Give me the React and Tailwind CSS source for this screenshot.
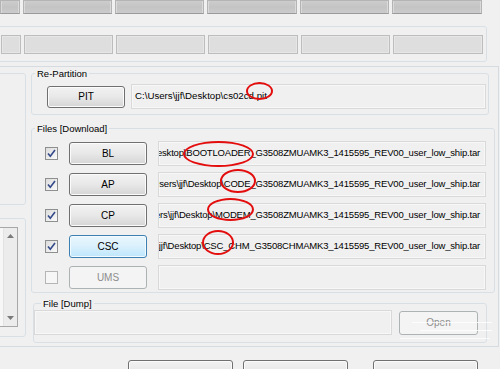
import React from "react";

const font = { fontFamily: '"Liberation Sans", Arial, sans-serif' };

const topCells = [20, 89, 89, 90, 89, 90];

function WinButton({ label, active, disabled, className = "" }) {
  let look =
    "border-[#707070] bg-gradient-to-b from-[#f2f2f2] via-[#e8e8e8] to-[#d5d5d5] text-black shadow-[inset_0_0_0_1px_#fbfbfb]";
  if (active)
    look =
      "border-[#3c7fb1] bg-gradient-to-b from-[#eaf6fd] via-[#d9f0fc] to-[#bee6fd] text-black shadow-[inset_0_0_0_1px_#f4fbff]";
  if (disabled) look = "border-[#adb2b5] bg-[#f4f4f4] text-[#8d8d8d]";
  return (
    <div
      className={`flex items-center justify-center rounded-[3px] border text-[10px] ${look} ${className}`}
    >
      {label}
    </div>
  );
}

function Check({ on }) {
  return (
    <div
      className={`w-[13px] h-[13px] shrink-0 border ${
        on
          ? "border-[#8e8f8f] bg-gradient-to-br from-[#dcdcdc] to-[#fafafa]"
          : "border-[#b5b5b5] bg-[#f6f6f6]"
      }`}
    >
      {on && (
        <svg width="11" height="11" viewBox="0 0 11 11">
          <path d="M2 5.5 L4.3 8.3 L9 2" fill="none" stroke="#33498a" strokeWidth="1.6" />
        </svg>
      )}
    </div>
  );
}

function Field({ text, className = "" }) {
  return (
    <div
      className={`flex items-center justify-end overflow-hidden whitespace-nowrap border border-[#d9d9d9] bg-[#f0f0f0] pr-[5px] text-[9.5px] tracking-[-0.18px] text-black shadow-[inset_0_0_0_1px_#f7f7f7] ${className}`}
    >
      {text}
    </div>
  );
}

const files = [
  { label: "BL", on: true, text: "C:\\Users\\jjf\\Desktop\\BOOTLOADER_G3508ZMUAMK3_1415595_REV00_user_low_ship.tar" },
  { label: "AP", on: true, text: "C:\\Users\\jjf\\Desktop\\CODE_G3508ZMUAMK3_1415595_REV00_user_low_ship.tar" },
  { label: "CP", on: true, text: "C:\\Users\\jjf\\Desktop\\MODEM_G3508ZMUAMK3_1415595_REV00_user_low_ship.tar" },
  { label: "CSC", on: true, active: true, text: "C:\\Users\\jjf\\Desktop\\CSC_CHM_G3508CHMAMK3_1415595_REV00_user_low_ship.tar" },
  { label: "UMS", on: false, disabled: true, text: "" },
];

// red hand-drawn marks over the paths
const marks = [
  "left-[246px] top-[82px] w-[27px] h-[18px]",
  "left-[183px] top-[141px] w-[71px] h-[26px]",
  "left-[220px] top-[169px] w-[36px] h-[24px]",
  "left-[207px] top-[198px] w-[47px] h-[23px]",
  "left-[202px] top-[230px] w-[32px] h-[25px]",
];

export default function App() {
  return (
    <div className="relative w-[500px] h-[369px] overflow-hidden bg-[#f0f0f0]" style={font}>
      {/* top progress cells */}
      <div className="flex gap-[3px] h-[14px]">
        {topCells.map((w, i) => (
          <div
            key={i}
            style={{ width: w }}
            className="h-full border border-[#b4b4b4] border-b-[#9a9a9a] bg-gradient-to-b from-[#cdcdcd] via-[#c4c4c4] to-[#cbcbcd] shadow-[inset_1px_0_0_#dadada,inset_-1px_0_0_#dadada]"
          />
        ))}
      </div>

      {/* status cells */}
      <div className="mt-[12px] -ml-[4px] w-[491px] h-[36px] rounded-[3px] border border-[#d8e0e6] pt-[8px] pl-[4px]">
        <div className="flex gap-[3px] h-[19px]">
          {topCells.map((w, i) => (
            <div
              key={i}
              style={{ width: w }}
              className="h-full border border-[#bdbdbd] bg-[#dedede] shadow-[inset_0_0_0_1px_#e6e6e6]"
            />
          ))}
        </div>
      </div>

      {/* main area */}
      <div className="mt-[4px] w-[499px] h-[281px] border-t border-r border-b border-[#d6dbdf] flex">
        {/* left column */}
        <div className="w-[26px] shrink-0">
          <div className="mt-[6px] -ml-[4px] w-[30px] h-[132px] rounded-[3px] border border-[#d8e0e6] pt-[20px] text-[11px] leading-[11px] text-[#8de3ea]">
            <div className="-ml-[5px]">l</div>
            <div className="-ml-[5px]">l</div>
          </div>
          <div className="mt-[13px] -ml-[4px] w-[30px] h-[119px] rounded-[3px] border border-[#d8e0e6] pt-[8px]">
            <div className="w-[21px] h-[100px] border-t border-r border-b border-[#a8a8a8] bg-[#f7f7f7] flex justify-end">
              <div className="w-[14px] h-full border-l border-[#e3e3e3] bg-[#ececec] flex flex-col items-center justify-between py-[6px]">
                <svg width="7" height="4" viewBox="0 0 7 4">
                  <path d="M0 4 L3.5 0 L7 4 Z" fill="#7a7a7a" />
                </svg>
                <svg width="7" height="4" viewBox="0 0 7 4">
                  <path d="M0 0 L3.5 4 L7 0 Z" fill="#7a7a7a" />
                </svg>
              </div>
            </div>
          </div>
        </div>

        {/* right column */}
        <div className="ml-[5px]">
          <fieldset className="w-[458px] rounded-[3px] border border-[#d8e0e6] pt-[4px] pb-[5px]">
            <legend className="ml-[3px] px-[2px] text-[9.5px] leading-[13px] text-black">Re-Partition</legend>
            <div className="flex items-center h-[25px] pl-[15px] gap-[6px]">
              <WinButton label="PIT" className="w-[78px] h-[22px]" />
              <div className="flex items-center w-[355px] h-[25px] border border-[#d9d9d9] bg-[#f0f0f0] pl-[3px] text-[9.7px] text-black whitespace-nowrap shadow-[inset_0_0_0_1px_#f7f7f7]">
                C:\Users\jjf\Desktop\cs02cd.pit
              </div>
            </div>
          </fieldset>

          <fieldset className="mt-[7px] w-[464px] rounded-[3px] border border-[#d8e0e6] pt-[6px] pb-[2px]">
            <legend className="ml-[3px] px-[2px] text-[9.5px] leading-[13px] text-black">Files [Download]</legend>
            <div className="flex flex-col gap-[6px]">
              {files.map((f) => (
                <div key={f.label} className="flex items-center h-[25px] pl-[13px]">
                  <Check on={f.on} />
                  <WinButton
                    label={f.label}
                    active={f.active}
                    disabled={f.disabled}
                    className="ml-[11px] w-[78px] h-[23px]"
                  />
                  <Field text={f.text} className="ml-[11px] w-[328px] h-[25px]" />
                </div>
              ))}
            </div>
          </fieldset>

          <fieldset className="mt-[4px] ml-[2px] w-[454px] rounded-[3px] border border-[#d8e0e6] pb-[7px]">
            <legend className="ml-[7px] px-[2px] text-[9.5px] leading-[13px] text-black">File [Dump]</legend>
            <div className="flex items-center h-[25px]">
              <Field text="" className="w-[358px] h-[25px]" />
              <WinButton label="Open" disabled className="ml-[7px] w-[79px] h-[24px]" />
            </div>
          </fieldset>
        </div>
      </div>

      {/* bottom buttons */}
      <div className="mt-[13px] flex">
        <WinButton label="" className="ml-[128px] w-[105px] h-[22px]" />
        <WinButton label="" className="ml-[10px] w-[105px] h-[22px]" />
        <WinButton label="" className="ml-[25px] w-[105px] h-[22px]" />
      </div>

      {/* red marks */}
      {marks.map((m, i) => (
        <div key={i} className={`absolute ${m} rounded-[50%] border-2 border-[#e40d0d]`} />
      ))}

      {/* faint watermark */}
      <div className="absolute left-[412px] top-[322px] w-[80px] h-[1px] bg-white/80" />
      <div className="absolute left-[420px] top-[330px] w-[72px] h-[1px] bg-white/80" />
      <div className="absolute left-[400px] top-[338px] w-[90px] h-[1px] bg-white/70" />
    </div>
  );
}
